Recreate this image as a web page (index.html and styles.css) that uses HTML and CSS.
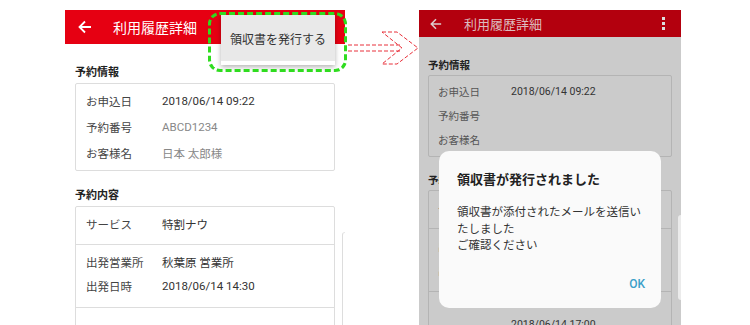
FILE: index.html
```html
<!DOCTYPE html>
<html lang="ja">
<head>
    <meta charset="UTF-8">
    <meta name="viewport" content="width=device-width, initial-scale=1.0">
    <title>領収書の発行</title>
    <link rel="stylesheet" href="styles.css">
</head>
<body>
    <div class="stage">
        <!-- step 1: menu -->
        <div class="phone">
            <div class="appbar">
                <svg class="back" width="14" height="14" viewBox="0 0 14 14"><path d="M13 7H2M7 1.5L1.5 7 7 12.5" fill="none" stroke="#fff" stroke-width="1.8"/></svg>
                <span class="title">利用履歴詳細</span>
            </div>
            <div class="menu">
                <div class="menu-item">領収書を発行する</div>
            </div>
            <div class="highlight"></div>
            <div class="screen">
                <div class="main">
                    <div class="section-title">予約情報</div>
                    <div class="card">
                        <div class="row"><span class="label">お申込日</span><span class="value">2018/06/14 09:22</span></div>
                        <div class="row"><span class="label">予約番号</span><span class="value muted">ABCD1234</span></div>
                        <div class="row"><span class="label">お客様名</span><span class="value muted">日本 太郎様</span></div>
                    </div>
                    <div class="section-title second">予約内容</div>
                    <div class="card">
                        <div class="group single">
                            <div class="row"><span class="label">サービス</span><span class="value">特割ナウ</span></div>
                        </div>
                        <div class="group">
                            <div class="row tight"><span class="label">出発営業所</span><span class="value">秋葉原 営業所</span></div>
                            <div class="row tight"><span class="label">出発日時</span><span class="value">2018/06/14 14:30</span></div>
                        </div>
                        <div class="group last"></div>
                    </div>
                </div>
                <div class="peek"></div>
            </div>
        </div>

        <svg class="pointer" width="74" height="70" viewBox="0 0 74 70">
            <g fill="none" stroke="#e8303a" stroke-width="1" stroke-dasharray="4 2">
                <line x1="3" y1="35" x2="56" y2="35"/>
                <line x1="3" y1="41" x2="56" y2="41"/>
                <polyline points="37,22 52,22 73,38 52,54 37,54 57,38 37,22"/>
            </g>
        </svg>

        <!-- step 2: dialog -->
        <div class="phone dim">
            <div class="appbar small">
                <svg class="back" width="12" height="12" viewBox="0 0 14 14"><path d="M13 7H2M7 1.5L1.5 7 7 12.5" fill="none" stroke="#dcc" stroke-width="1.8"/></svg>
                <span class="title">利用履歴詳細</span>
                <span class="kebab"><i></i><i></i><i></i></span>
            </div>
            <div class="screen">
                <div class="main">
                    <div class="section-title">予約情報</div>
                    <div class="card">
                        <div class="row"><span class="label">お申込日</span><span class="value">2018/06/14 09:22</span></div>
                        <div class="row"><span class="label">予約番号</span><span class="value"></span></div>
                        <div class="row"><span class="label">お客様名</span><span class="value"></span></div>
                    </div>
                    <div class="section-title second">予約内容</div>
                    <div class="card">
                        <div class="group single">
                            <div class="row"><span class="label">サービス</span><span class="value">特割ナウ</span></div>
                        </div>
                        <div class="group">
                            <div class="row tight"><span class="label">出発営業所</span><span class="value">秋葉原 営業所</span></div>
                            <div class="row tight"><span class="label">出発日時</span><span class="value">2018/06/14 14:30</span></div>
                        </div>
                        <div class="group last">
                            <div class="row"><span class="label"></span><span class="value">2018/06/14 17:00</span></div>
                        </div>
                    </div>
                </div>
                <div class="peek"></div>
            </div>
            <div class="dialog">
                <div class="dialog-title">領収書が発行されました</div>
                <div class="dialog-text">領収書が添付されたメールを送信い<br>たしました<br>ご確認ください</div>
                <div class="dialog-actions"><span class="ok">OK</span></div>
            </div>
        </div>
    </div>
</body>
</html>
```

FILE: styles.css
```css
body {
    margin: 0;
    height: 325px;
    overflow: hidden;
    background: #fff;
    font-family: Roboto, "Noto Sans CJK JP", sans-serif;
    color: #333;
}
.stage {
    display: flex;
    align-items: flex-start;
    padding: 10px 0 0 65px;
}
.phone {
    position: relative;
    width: 280px;
    height: 315px;
    background: #fff;
}
.appbar {
    height: 34px;
    display: flex;
    align-items: center;
    padding-left: 13px;
    background: #e60012;
}
.appbar .title {
    margin-left: 21px;
    font-size: 14px;
    color: #fff;
}
.menu {
    position: absolute;
    top: 5px;
    left: 156px;
    width: 114px;
    padding-bottom: 4px;
    background: #fff;
    box-shadow: 0 2px 5px rgba(0, 0, 0, 0.3);
}
.menu-item {
    height: 42px;
    padding-top: 4px;
    line-height: 42px;
    text-align: center;
    font-size: 12px;
    color: #333;
    background: #e9e9e9;
}
.highlight {
    position: absolute;
    top: 2px;
    left: 143px;
    width: 133px;
    height: 54px;
    border: 3px dashed #2fdc1f;
    border-radius: 12px;
}
.screen {
    display: flex;
}
.main {
    width: 260px;
    margin-left: 10px;
}
.section-title {
    margin-top: 22px;
    margin-bottom: 3px;
    font-size: 11px;
    line-height: 14px;
    font-weight: bold;
    color: #222;
}
.section-title.second { margin-top: 18px; }
.card {
    border: 1px solid #ddd;
    border-radius: 2px;
    padding: 4px 0;
}
.row {
    display: flex;
    align-items: center;
    height: 26px;
    padding-left: 10px;
    font-size: 11.5px;
}
.row.tight { height: 24px; }
.label {
    width: 76px;
    color: #444;
}
.value { color: #333; }
.value.muted { color: #888; }
.card:has(.group) { padding: 0; }
.group {
    border-bottom: 1px solid #ddd;
    padding: 5px 0 9px;
}
.group.single {
    padding: 4px 0 7px;
}
.group.last {
    border-bottom: none;
    height: 30px;
}
.peek {
    flex: 1;
    height: 100px;
    margin: 188px 0 0 7px;
    border-left: 1px solid #ddd;
    border-top: 1px solid #e6e6e6;
    border-top-left-radius: 6px;
}
.pointer {
    flex: none;
}

/* dimmed screen behind the dialog */
.phone.dim {
    width: 262px;
    background: #cbcbcb;
}
.appbar.small {
    height: 27px;
    padding: 0 0 0 11px;
    background: #b3000e;
}
.appbar.small .title {
    margin-left: 22px;
    font-size: 13px;
    color: #dcbcbf;
}
.kebab {
    margin-left: auto;
    margin-right: 16px;
    display: flex;
    flex-direction: column;
    gap: 2px;
}
.kebab i {
    width: 3px;
    height: 3px;
    background: #ddd;
}
.dim .main {
    width: 244px;
    margin-left: 9px;
}
.dim .section-title {
    margin-top: 22px;
    margin-bottom: 2px;
    font-size: 10.5px;
    color: #222;
}
.dim .section-title.second { margin-top: 17px; }
.dim .card { border-color: #b4b4b4; padding: 3px 0 5px; }
.dim .card:has(.group) { padding: 0; }
.dim .group { border-color: #b4b4b4; }
.dim .row {
    height: 24px;
    padding-left: 9px;
    font-size: 10.5px;
}
.dim .label {
    width: 73px;
    color: #555;
}
.dim .value { color: #333; }
.dim .group.single { padding: 6px 0 7px; }
.dim .group { padding: 5px 0 9px; }
.dim .group.last { padding-top: 20px; height: 40px; }
.dim .peek {
    margin: 178px 0 0 6px;
    height: 85px;
    border: none;
    background: #ebebeb;
    border-radius: 4px 0 0 4px;
}
.dialog {
    position: absolute;
    top: 141px;
    left: 20px;
    width: 222px;
    height: 157px;
    box-sizing: border-box;
    padding: 20px 12px 0 18px;
    background: #fafafa;
    border-radius: 10px;
}
.dialog-title {
    font-size: 13px;
    line-height: 18px;
    font-weight: bold;
    color: #222;
}
.dialog-text {
    margin-top: 15px;
    font-size: 11.5px;
    line-height: 16.5px;
    white-space: nowrap;
    color: #333;
}
.dialog-actions {
    margin-top: 19px;
    padding-right: 4px;
    text-align: right;
}
.ok {
    font-size: 12px;
    font-weight: 500;
    color: #3a9fc9;
}
```
